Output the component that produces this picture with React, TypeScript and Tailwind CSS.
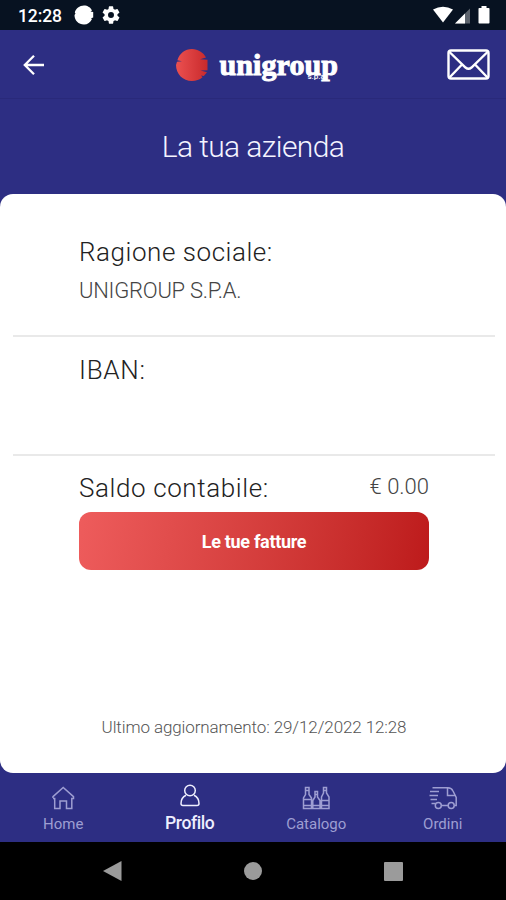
import type { ReactNode } from "react";

function StatusBar() {
  return (
    <div className="h-[30px] bg-[#071221] flex items-center justify-between pl-[18px] pr-[15px] text-white">
      <div className="flex items-center">
        <span className="w-[44px] text-[17.5px] font-medium tracking-[-0.1px] leading-[30px] pt-px whitespace-nowrap">12:28</span>
        <svg className="ml-[12px]" width="20" height="20" viewBox="0 0 20 20" fill="currentColor">
          <path d="M10 .5C13.5.5 16.8 2.5 18 5.5L16.500 6.600 19.200 7.100V12.500L17 13.200 18 14C16.500 17.500 13.500 19.500 10 19.500 4.500 19.500.500 15.500.500 10L1.500 8.500.800 7.500C1.800 3.500 5.500.500 10 .500Z" />
        </svg>
        <svg className="ml-[8px]" width="18" height="18" viewBox="2 2 20 20" fill="currentColor">
          <path d="M19.140 12.940c.04-.3.060-.610.060-.940s-.020-.640-.070-.940l2.030-1.580a.49.49 0 0 0 .12-.61l-1.920-3.320a.49.49 0 0 0-.59-.22l-2.390.96a7 7 0 0 0-1.620-.94l-.36-2.540a.48.48 0 0 0-.48-.41h-3.840a.47.47 0 0 0-.47.41l-.36 2.540c-.59.24-1.130.57-1.620.94l-2.390-.96a.47.47 0 0 0-.59.22L2.740 8.870a.48.48 0 0 0 .12.610l2.030 1.580a6.500 6.500 0 0 0-.02 1.880l-2.010 1.580a.49.49 0 0 0-.12.610l1.920 3.320c.12.22.37.29.59.22l2.390-.96c.5.38 1.030.7 1.620.94l.36 2.540c.05.24.24.41.48.41h3.840c.24 0 .44-.17.47-.41l.36-2.540a6.900 6.900 0 0 0 1.620-.94l2.390.96c.22.080.47 0 .59-.22l1.920-3.320a.47.47 0 0 0-.12-.610zM12 15.300a3.300 3.300 0 1 1 0-6.600 3.300 3.300 0 0 1 0 6.600z" />
        </svg>
      </div>
      <svg width="58" height="20" viewBox="0 0 58 20" fill="currentColor">
        <path d="M0 4.500Q10 -1 20 4.500L10 17.500Z" />
        <path d="M22 18.500 37 3.500V18.500Z" opacity=".35" />
        <path d="M22 18.500 32 8.500V18.500Z" />
        <path d="M48.500 1h5v2h2.200q.8 0 .8.800v14q0 .8-.8.800h-9.400q-.8 0-.8-.8V3.800q0-.8.8-.8H48.500Z" />
      </svg>
    </div>
  );
}

function Header() {
  return (
    <header className="h-[69px] flex items-center justify-between pl-[23px] pr-[16px] pt-px border-b border-[#29297a] text-white">
      <svg width="22" height="22" viewBox="0 0 22 22" fill="none" stroke="currentColor" strokeWidth="2.300">
        <path d="M21 11H2M11 1.800 1.800 11 11 20.200" />
      </svg>
      <div className="flex items-center ml-[22px]">
        <svg width="32" height="32" viewBox="0 0 32 32">
          <defs>
            <linearGradient id="logo">
              <stop offset="0" stopColor="#eb5050" />
              <stop offset="1" stopColor="#c92a2c" />
            </linearGradient>
          </defs>
          <path
            fill="url(#logo)"
            d="M16 0C22 0 27.500 3.500 30 8.600L24 10.200 31.500 10.800V21.300L24.500 21.600 31 23.200 27.800 27 25 26.500 26.500 28.300C23.500 31 20 32 16 32 7 32 0 25 0 16L1 12.700 6 12.200 1.400 11.200C3.500 4.500 9 0 16 0Z"
          />
        </svg>
        <div className="relative ml-[12px] w-[119px] h-[36px]">
          <span className="block mt-[2px] font-['Liberation_Serif',serif] font-bold text-[30px] leading-[32px] tracking-[0.1px] [-webkit-text-stroke:1px_white]">
            unigroup
          </span>
          <span className="absolute left-[88px] top-[25px] text-[8px] leading-[10px] font-medium">s.p.a.</span>
        </div>
      </div>
      <svg width="43" height="31" viewBox="0 0 43 31" fill="none" stroke="currentColor" strokeWidth="2.400">
        <rect x="1.500" y="1.500" width="40" height="28" rx="2.500" />
        <path d="M2.500 3 18.500 18.500Q21.500 21 24.500 18.500L40.500 3M2.500 28.500 15 15.500M40.500 28.500 28 15.500" />
      </svg>
    </header>
  );
}

const tabs: { label: string; active?: boolean; icon: ReactNode }[] = [
  {
    label: "Home",
    icon: <path d="M4 12V10.700L14.200 1.500 24.500 10.700V12.500H22.800V22.500H17.500V15H11V22.500H5.700V12.500H4" />,
  },
  {
    label: "Profilo",
    active: true,
    icon: (
      <>
        <circle cx="14" cy="6.500" r="5.300" />
        <path d="M10 11.300C6.800 12.800 5 16 5 19.500Q5 21.500 7 21.500H21Q23 21.500 23 19.500C23 16 21.200 12.800 18 11.300" />
      </>
    ),
  },
  {
    label: "Catalogo",
    icon: (
      <path d="M3.500 1.500H7V8.500L9.500 12V22.500H1.500V12L3.500 8.500ZM3.500 4.500H7M1.500 13.500H9.500M1.500 19.500H9.500M13 5.500H15.500V11L18 14.500V22.500H10.800V14.500L13 11ZM13 8.500H15.500M10.800 19.500H18M21.500 1.500H24.500V7L27 11V22.500H19.500V11L21.500 7ZM21.500 4.500H24.500M19.500 14.500H27M19.500 19.500H27" />
    ),
  },
  {
    label: "Ordini",
    icon: (
      <>
        <path d="M3.500 1.700H19Q22.500 1.700 24 5L27.200 11.500V19.500H25.500M18.500 1.700V9.500H26M1 5.500H10M.5 9.500H9M1.500 13.500H8M2.500 17.500H6.500M12.500 19.500H19" />
        <circle cx="9.300" cy="19.500" r="3" />
        <circle cx="22.200" cy="19.500" r="3" />
      </>
    ),
  },
];

function TabBar() {
  return (
    <nav className="h-[69px] grid grid-cols-4">
      {tabs.map((t) => (
        <div
          key={t.label}
          className={`flex flex-col items-center ${t.active ? "pt-[11px] text-[#eeeefe]" : "pt-[13px] text-[#9e9ed2]"}`}
        >
          <svg width="28" height="25" viewBox="0 0 28 25" fill="none" stroke="currentColor" strokeWidth="1.500">
            {t.icon}
          </svg>
          <span
            className={
              t.active
                ? "mt-[4px] text-[17.5px] leading-[21px] font-medium tracking-[-0.4px]"
                : "mt-[3px] text-[15px] leading-[21px]"
            }
          >
            {t.label}
          </span>
        </div>
      ))}
    </nav>
  );
}

function AndroidNav() {
  return (
    <div className="h-[58px] bg-black flex items-center justify-between pl-[103px] pr-[103px]">
      <svg width="19" height="22" viewBox="0 0 19 22" fill="#9b9b9b">
        <path d="M0 11 18.500 1V21Z" />
      </svg>
      <div className="size-[18px] rounded-full bg-[#9b9b9b]" />
      <div className="size-[19px] rounded-[1px] bg-[#9b9b9b]" />
    </div>
  );
}

export default function App() {
  return (
    <div className="w-[506px] h-[900px] overflow-hidden flex flex-col bg-[#2d2e83] font-['Roboto',sans-serif]">
      <StatusBar />
      <Header />
      <h1 className="h-[95px] text-center text-[30px] leading-[95px] font-light tracking-[-0.6px] text-[#f4f4ff]">
        La tua azienda
      </h1>

      <main className="h-[579px] bg-white rounded-[13px] pl-[13px] pr-[11px] flex flex-col text-[#222]">
        <section className="h-[143px] border-b-2 border-[#e9e9e9] px-[66px] pt-[42px]">
          <h2 className="text-[26px] leading-[32px] font-light tracking-[0.55px]">Ragione sociale:</h2>
          <p className="mt-[9px] text-[22px] leading-[28px] font-light tracking-[-0.25px] text-[#444]">UNIGROUP S.P.A.</p>
        </section>
        <section className="h-[119px] border-b-2 border-[#e9e9e9] px-[66px] pt-[17px]">
          <h2 className="text-[26px] leading-[32px] font-light tracking-[0.7px]">IBAN:</h2>
        </section>
        <section className="px-[66px] pt-[15px]">
          <div className="w-[350px] flex justify-between items-start">
            <h2 className="text-[26px] leading-[34px] font-light tracking-[0.6px]">Saldo contabile:</h2>
            <span className="text-[22px] leading-[32px] font-light text-[#444]">€ 0.00</span>
          </div>
          <button className="mt-[7px] w-[350px] h-[58px] rounded-[12px] bg-linear-100 from-[#ee5c5c] to-[#bd1a1b] text-white text-[18px] font-bold tracking-[-0.3px]">
            Le tue fatture
          </button>
        </section>
        <p className="mt-auto mb-[34px] text-center text-[17px] leading-[24px] font-light tracking-[-0.1px] text-[#555]">
          Ultimo aggiornamento: 29/12/2022 12:28
        </p>
      </main>

      <TabBar />
      <AndroidNav />
    </div>
  );
}
